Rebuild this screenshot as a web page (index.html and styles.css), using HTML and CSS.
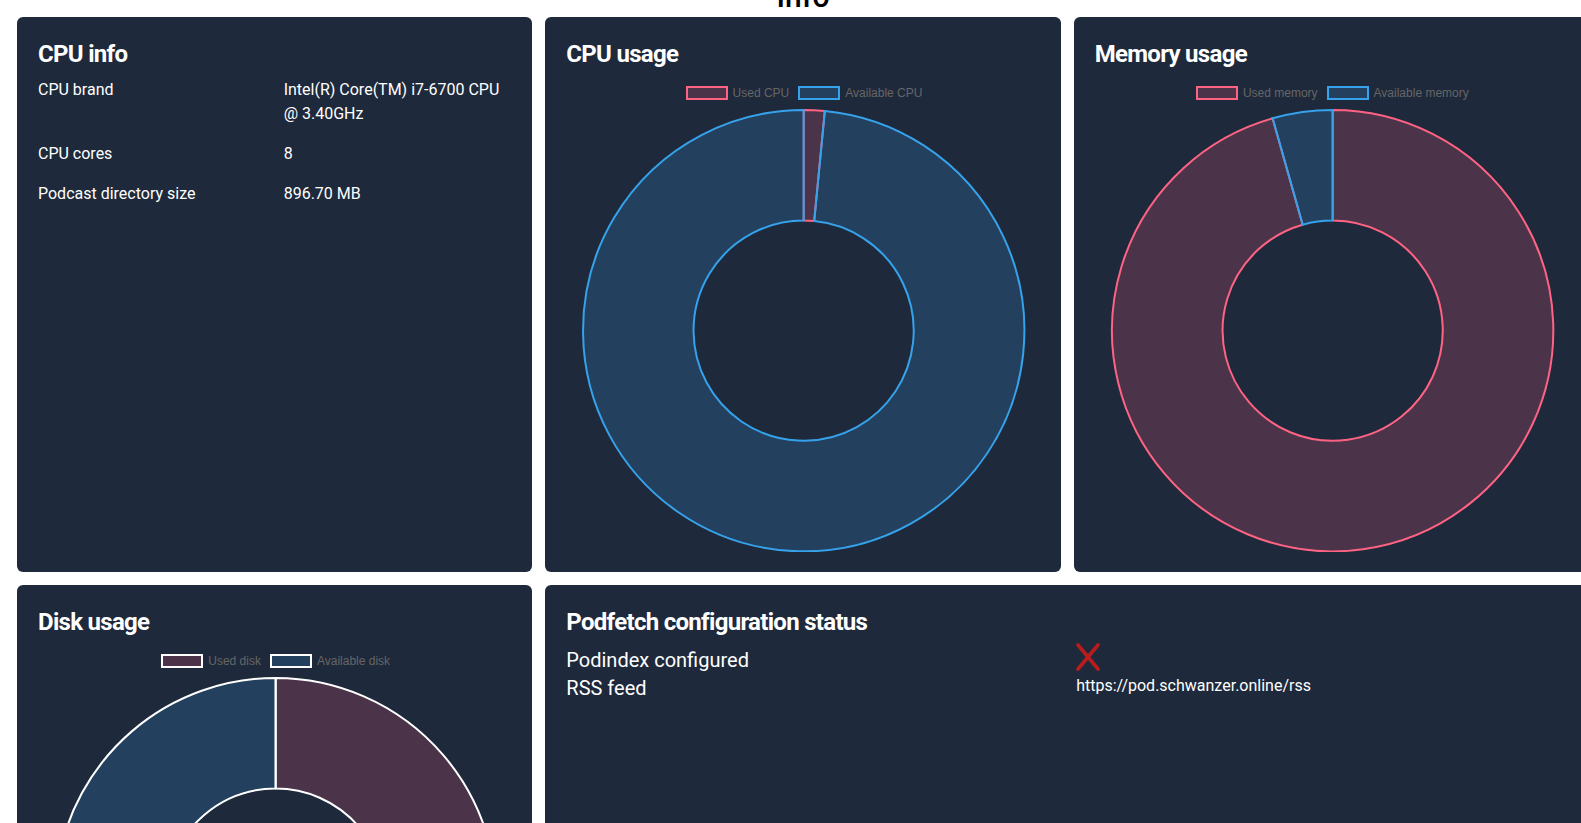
FILE: index.html
```html
<!DOCTYPE html>
<html lang="en">
<head>
<meta charset="utf-8">
<title>Info</title>
<link rel="stylesheet" href="styles.css">
</head>
<body>
<div class="page">
  <h1 class="page-title">Info</h1>
  <div class="grid">
    <section class="card">
      <h2 class="card-title">CPU info</h2>
      <div class="info-grid">
        <span>CPU brand</span><span>Intel(R) Core(TM) i7-6700 CPU @ 3.40GHz</span>
        <span>CPU cores</span><span>8</span>
        <span>Podcast directory size</span><span>896.70 MB</span>
      </div>
    </section>

    <section class="card">
      <h2 class="card-title">CPU usage</h2>
      <div class="chart">
        <div class="legend">
          <span class="legend-item"><span class="swatch swatch-used"></span>Used CPU</span>
          <span class="legend-item"><span class="swatch swatch-avail"></span>Available CPU</span>
        </div>
        <svg viewBox="-221.5 -221.5 443 443" aria-hidden="true">
          <path class="arc-used" d="M 0 -220.5 A 220.5 220.5 0 0 1 21.13 -219.49 L 10.54 -109.49 A 110 110 0 0 0 0 -110 Z"/>
          <path class="arc-avail" d="M 21.13 -219.49 A 220.5 220.5 0 1 1 0 -220.5 L 0 -110 A 110 110 0 1 0 10.54 -109.49 Z"/>
        </svg>
      </div>
    </section>

    <section class="card">
      <h2 class="card-title">Memory usage</h2>
      <div class="chart">
        <div class="legend">
          <span class="legend-item"><span class="swatch swatch-used"></span>Used memory</span>
          <span class="legend-item"><span class="swatch swatch-avail"></span>Available memory</span>
        </div>
        <svg viewBox="-221.5 -221.5 443 443" aria-hidden="true">
          <path class="arc-used" d="M 0 -220.5 A 220.5 220.5 0 1 1 -60.04 -212.17 L -29.95 -105.84 A 110 110 0 1 0 0 -110 Z"/>
          <path class="arc-avail" d="M -60.04 -212.17 A 220.5 220.5 0 0 1 0 -220.5 L 0 -110 A 110 110 0 0 0 -29.95 -105.84 Z"/>
        </svg>
      </div>
    </section>

    <section class="card">
      <h2 class="card-title">Disk usage</h2>
      <div class="chart">
        <div class="legend">
          <span class="legend-item"><span class="swatch swatch-used swatch-white"></span>Used disk</span>
          <span class="legend-item"><span class="swatch swatch-avail swatch-white"></span>Available disk</span>
        </div>
        <svg viewBox="-221.5 -221.5 443 443" aria-hidden="true">
          <path class="arc-used arc-white" d="M 0 -220.5 A 220.5 220.5 0 1 1 -68.14 209.71 L -33.99 104.62 A 110 110 0 1 0 0 -110 Z"/>
          <path class="arc-avail arc-white" d="M -68.14 209.71 A 220.5 220.5 0 0 1 0 -220.5 L 0 -110 A 110 110 0 0 0 -33.99 104.62 Z"/>
        </svg>
      </div>
    </section>

    <section class="card card-wide">
      <h2 class="card-title">Podfetch configuration status</h2>
      <div class="status-grid">
        <span class="status-label">Podindex configured</span>
        <span class="status-value">
          <svg class="status-icon" width="26" height="30" viewBox="0 0 26 30" aria-hidden="true">
            <path d="M3 3 L23 27 M23 3 L3 27"/>
          </svg>
        </span>
        <span class="status-label">RSS feed</span>
        <span class="status-url">https://pod.schwanzer.online/rss</span>
      </div>
    </section>
  </div>
</div>
</body>
</html>
```

FILE: styles.css
```css
html, body {
  margin: 0;
  padding: 0;
  background: #ffffff;
  overflow: hidden;
}

body {
  font-family: Roboto, "Noto Sans", sans-serif;
}

.page {
  width: 1606px;
  padding: 0 17px;
  box-sizing: border-box;
}

.page-title {
  margin: -21px 0 2px;
  text-align: center;
  font-size: 30px;
  line-height: 36px;
  font-weight: 500;
  color: #000000;
}

.grid {
  display: grid;
  grid-template-columns: repeat(3, minmax(0, 1fr));
  gap: 13px;
}

.card {
  background: #1e293b;
  border-radius: 6px;
  padding: 21px 19px 20px 21px;
  color: #ffffff;
  min-width: 0;
}

.card-wide {
  grid-column: span 2;
}

.card-title {
  margin: 0 0 7px;
  font-size: 24px;
  line-height: 32px;
  font-weight: 700;
  letter-spacing: -0.7px;
}

.info-grid {
  display: grid;
  grid-template-columns: minmax(0, 1fr) minmax(0, 1fr);
  gap: 16px;
  padding-top: 1px;
  font-size: 16px;
  line-height: 24px;
}

.chart {
  aspect-ratio: 1 / 1;
  display: flex;
  flex-direction: column;
}

.legend {
  display: flex;
  justify-content: center;
  gap: 9px;
  padding: 9px 0 9px;
  font-family: "Liberation Sans", Arial, sans-serif;
  font-size: 12px;
  line-height: 14px;
  color: #666666;
}

.legend-item {
  display: flex;
  align-items: center;
  gap: 5px;
  height: 14px;
}

.swatch {
  display: block;
  width: 38px;
  height: 10px;
  border: 2px solid;
}

.swatch-used {
  background: rgba(255, 99, 132, 0.2);
  border-color: rgb(255, 99, 132);
}

.swatch-avail {
  background: rgba(54, 162, 235, 0.2);
  border-color: rgb(54, 162, 235);
}

.swatch-white {
  border-color: #ffffff;
}

.chart svg {
  flex: 1;
  width: 100%;
  min-height: 0;
  display: block;
}

.arc-used {
  fill: rgba(255, 99, 132, 0.2);
  stroke: rgb(255, 99, 132);
  stroke-width: 2;
  stroke-linejoin: round;
}

.arc-avail {
  fill: rgba(54, 162, 235, 0.2);
  stroke: rgb(54, 162, 235);
  stroke-width: 2;
  stroke-linejoin: round;
}

.arc-white {
  stroke: #ffffff;
}

.status-grid {
  display: grid;
  grid-template-columns: minmax(0, 1fr) minmax(0, 1fr);
  column-gap: 16px;
  padding-top: 1px;
}

.status-label {
  font-size: 20px;
  line-height: 28px;
}

.status-value {
  display: block;
}

.status-icon {
  display: block;
  margin: -4px 0 0 -1px;
  fill: none;
  stroke: #b91c1c;
  stroke-width: 3.6;
  stroke-linecap: round;
}

.status-url {
  font-size: 16px;
  line-height: 24px;
}
```
